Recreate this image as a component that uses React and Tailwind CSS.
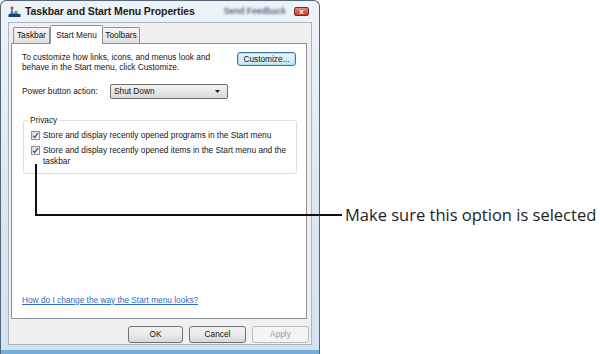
import React from "react";

const font = { fontFamily: '"Liberation Sans", Arial, sans-serif' };

function Check() {
  return (
    <div className="w-[9px] h-[9px] shrink-0 border border-[#8e8f8f] bg-gradient-to-br from-[#dcdcdc] to-[#fbfbfb] flex items-center justify-center">
      <svg width="7" height="7" viewBox="0 0 7 7">
        <path d="M1 3.8 L2.8 5.6 L6 1" fill="none" stroke="#2a4f8c" strokeWidth="1.3" />
      </svg>
    </div>
  );
}

function Btn({ children, w = "w-[56px]", disabled }) {
  return (
    <div
      className={`${w} h-[17px] rounded-[3px] border flex items-center justify-center text-[8.3px] ${
        disabled
          ? "border-[#b5b9bc] bg-[#f4f4f4] text-[#9a9a9a]"
          : "border-[#707070] bg-gradient-to-b from-[#f2f2f2] via-[#ebebeb] to-[#d6d6d6] text-[#111]"
      }`}
    >
      {children}
    </div>
  );
}

export default function App() {
  return (
    <div className="w-[600px] h-[354px] bg-white relative overflow-hidden" style={font}>
      {/* Window */}
      <div className="w-[320px] h-[354px] rounded-t-[6px] border border-[#55657a] border-b-0 bg-gradient-to-b from-[#eef3f8] via-[#dfe8f1] to-[#d4e2ef] flex flex-col">
        {/* Title bar */}
        <div className="h-[21px] flex items-center pl-[7px] pr-[10px] shrink-0">
          <svg width="13" height="13" viewBox="0 0 13 13" className="mr-[4px]">
            <rect x="0.5" y="9" width="12" height="3" fill="#1f3f78" />
            <path d="M2 9 L4 3 L6 9 Z" fill="#3f7fd0" />
            <path d="M5.5 9 L8 5 L10.5 9 Z" fill="#4aa657" />
            <circle cx="4" cy="3" r="1.5" fill="#c23a2b" />
          </svg>
          <span className="text-[10.5px] font-bold text-[#1c1c1c] tracking-[-0.1px] mt-[1px]">
            Taskbar and Start Menu Properties
          </span>
          <span className="ml-auto mr-[8px] text-[8.5px] font-bold text-[#5a6b80] blur-[0.8px]">
            Send Feedback
          </span>
          <div className="w-[15px] h-[9px] rounded-[2px] border border-[#7a2a22] bg-gradient-to-b from-[#e58a7c] to-[#c0392b] flex items-center justify-center text-white text-[8px] font-bold leading-none">
            x
          </div>
        </div>

        {/* Client area */}
        <div className="mx-[7px] h-[323px] bg-[#f0f0f0] border border-[#a7b5c4] flex flex-col">
          {/* Tabs */}
          <div className="h-[20px] flex items-end pl-[4px] shrink-0">
            <div className="w-[37px] h-[16px] border border-b-0 border-[#8e9298] bg-gradient-to-b from-[#f4f4f4] to-[#e1e1e1] flex items-center justify-center text-[8.3px] text-[#111] rounded-t-[2px]">
              Taskbar
            </div>
            <div className="w-[53px] h-[19px] border border-b-0 border-[#8e9298] bg-white flex items-start pt-[3px] justify-center text-[8.3px] text-[#111] rounded-t-[2px] -mb-px relative z-10">
              Start Menu
            </div>
            <div className="w-[37px] h-[16px] border border-b-0 border-l-0 border-[#8e9298] bg-gradient-to-b from-[#f4f4f4] to-[#e1e1e1] flex items-center justify-center text-[8.3px] text-[#111] rounded-t-[2px]">
              Toolbars
            </div>
          </div>

          {/* Panel */}
          <div className="ml-[2px] mr-[4px] h-[276px] border border-[#8e9298] bg-white flex flex-col px-[10px] pt-[8px] text-[8.3px] text-[#161616]">
            <div className="flex justify-between items-start">
              <div className="leading-[9.5px] mt-[1px]">
                To customize how links, icons, and menus look and
                <br />
                behave in the Start menu, click Customize.
              </div>
              <div className="w-[59px] h-[14px] rounded-[3px] border border-[#3d7bad] bg-gradient-to-b from-[#eaf6fd] to-[#c4e5f6] flex items-center justify-center shadow-[inset_0_0_0_1px_#a8dbf5]">
                Customize...
              </div>
            </div>

            <div className="flex items-center mt-[12px]">
              <span className="w-[88px]">Power button action:</span>
              <div className="w-[118px] h-[15px] rounded-[2px] border border-[#707070] bg-gradient-to-b from-[#f3f3f3] to-[#d9d9d9] flex items-center pl-[3px] pr-[7px]">
                <span>Shut Down</span>
                <svg width="5" height="3" viewBox="0 0 5 3" className="ml-auto">
                  <path d="M0 0 H5 L2.5 3 Z" fill="#1a1a1a" />
                </svg>
              </div>
            </div>

            <div className="relative mt-[21px] ml-[1px] mr-[-1px] h-[54px] border border-[#d5dfe5] rounded-[3px] pl-[7px] pt-[9px]">
              <span className="absolute -top-[6px] left-[4px] bg-white px-[2px] leading-[10px]">Privacy</span>
              <div className="flex items-center gap-[3px] leading-[10px]">
                <Check />
                <span>Store and display recently opened programs in the Start menu</span>
              </div>
              <div className="flex items-start gap-[3px] leading-[10.5px] mt-[5px]">
                <div className="mt-[1px]">
                  <Check />
                </div>
                <span className="whitespace-nowrap">
                  Store and display recently opened items in the Start menu and the
                  <br />
                  taskbar
                </span>
              </div>
            </div>

            <div className="mt-auto mb-[12px]">
              <span className="text-[#2d6bc6] underline">How do I change the way the Start menu looks?</span>
            </div>
          </div>

          {/* Buttons */}
          <div className="flex justify-end gap-[6px] pr-[2px] mt-[7px]">
            <Btn w="w-[55px]">OK</Btn>
            <Btn w="w-[57px]">Cancel</Btn>
            <Btn w="w-[57px]" disabled>Apply</Btn>
          </div>
        </div>

        {/* Bottom frame */}
        <div className="flex-1 border-b-[4px] border-[#73aedb]" />
      </div>

      {/* Callout */}
      <div className="absolute left-[35px] top-[164px] w-[2px] h-[52px] bg-[#111]" />
      <div className="absolute left-[35px] top-[214px] w-[307px] h-[2px] bg-[#111]" />
      <div
        className="absolute left-[345px] top-[203px] text-[16.5px] leading-[24px] text-[#1e1e1e] whitespace-nowrap"
        style={{ fontFamily: '"Open Sans", "Liberation Sans", sans-serif' }}
      >
        Make sure this option is selected
      </div>
    </div>
  );
}
